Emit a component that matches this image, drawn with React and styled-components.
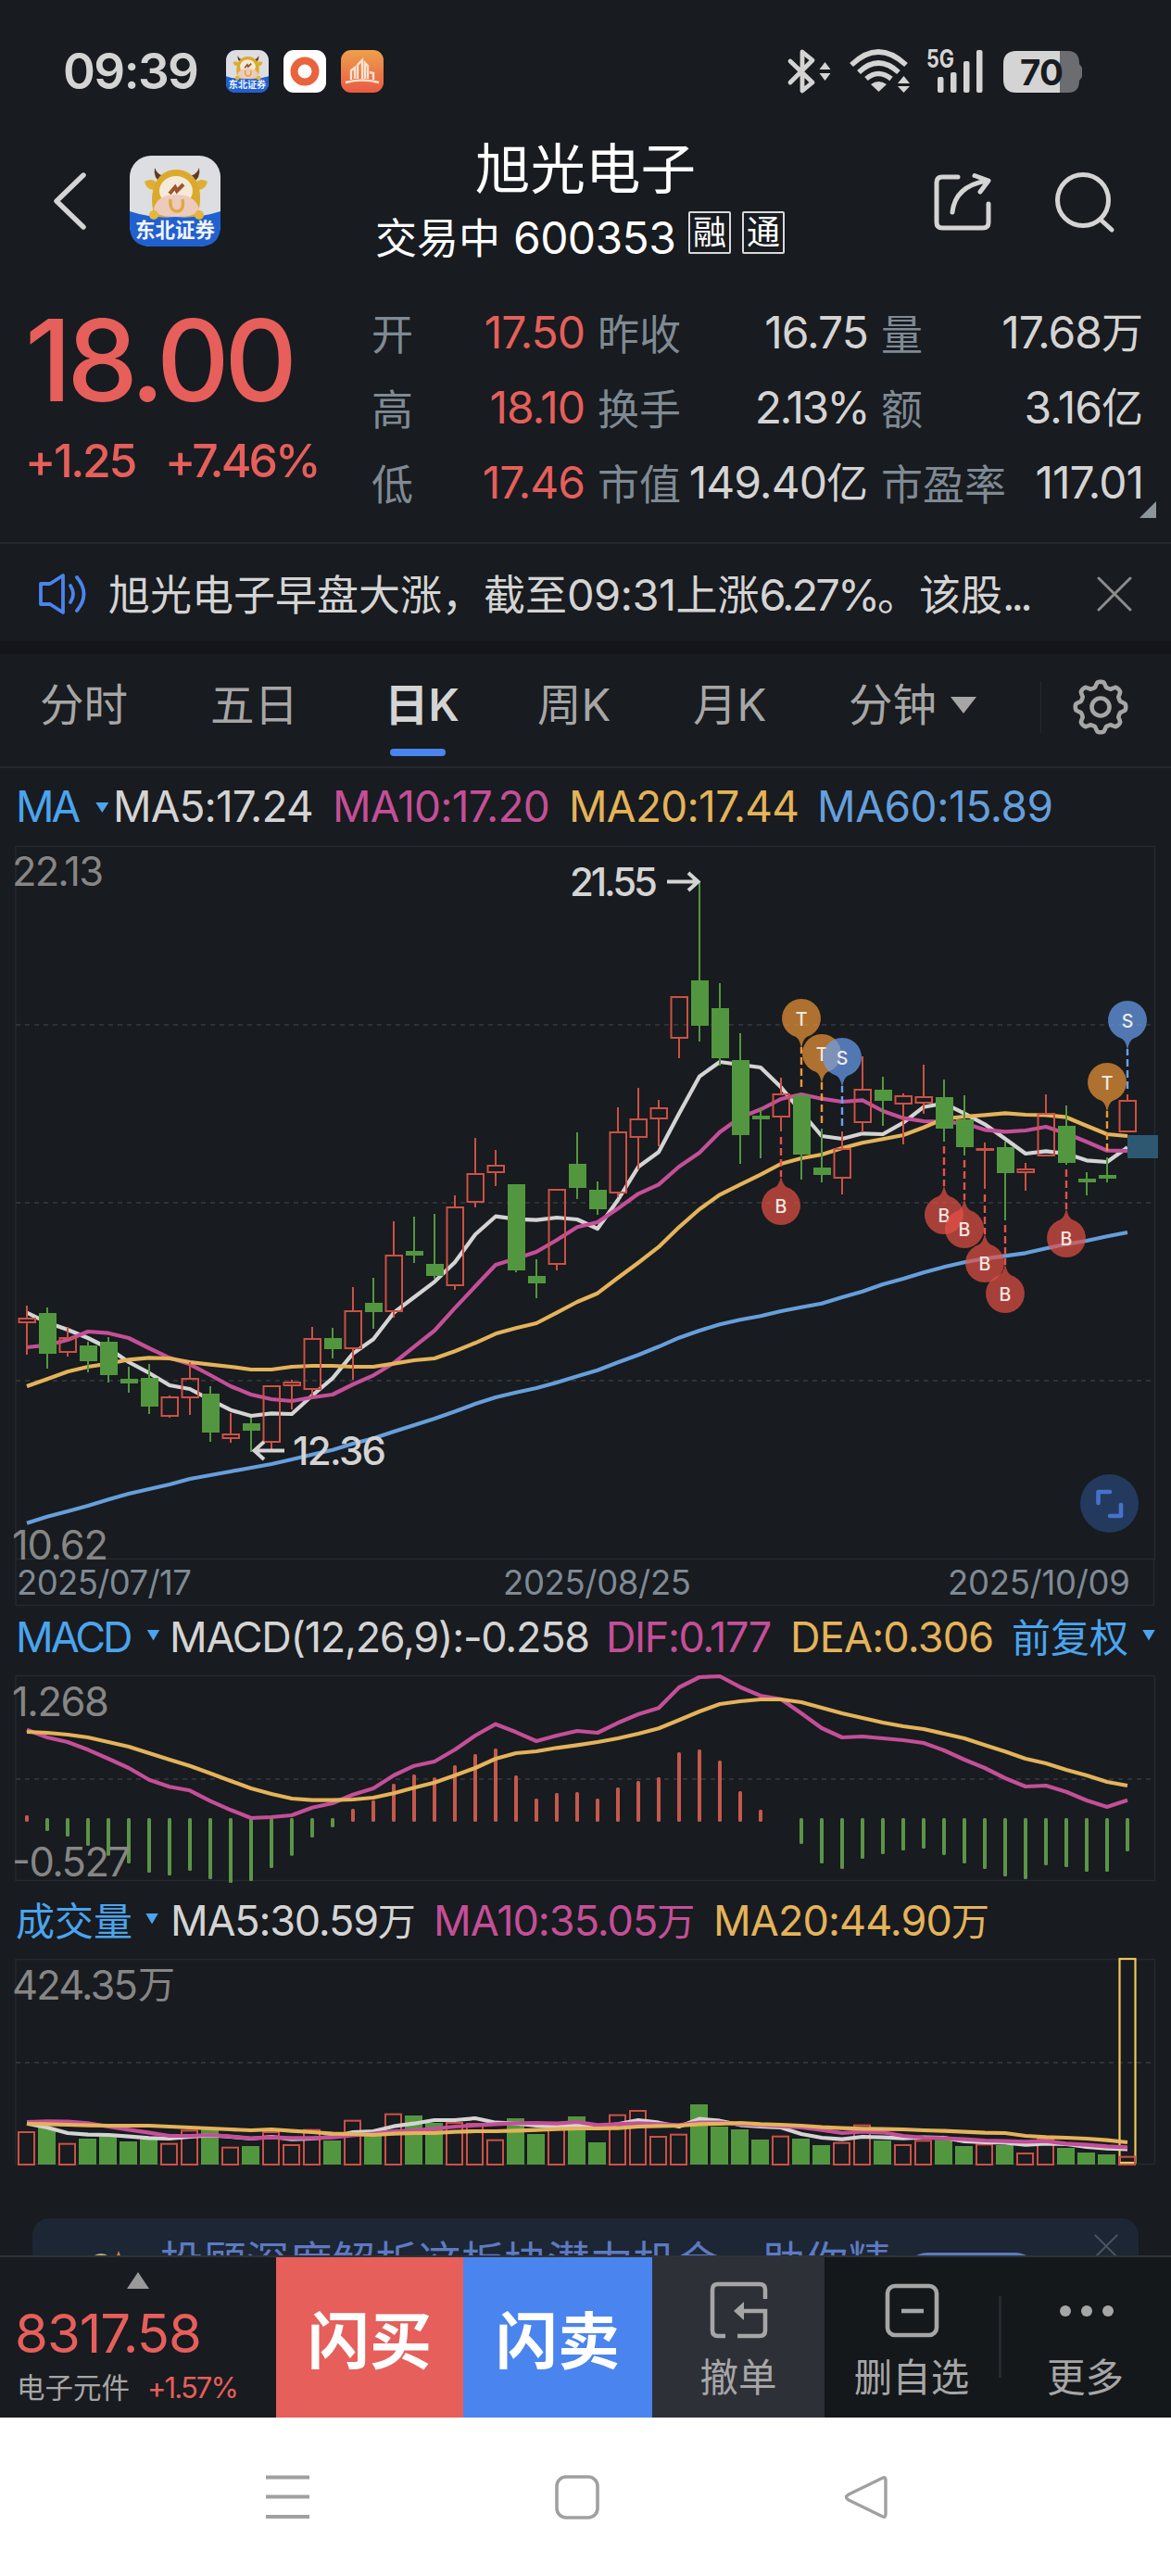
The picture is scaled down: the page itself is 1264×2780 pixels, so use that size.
import React from 'react';
import styled, { createGlobalStyle } from 'styled-components';

const colors = {
  bg: '#181b1f',
  line: '#26292e',
  text: '#d4d4d4',
  muted: '#7f8a94',
  tab: '#a6a6a6',
  axis: '#868686',
  red: '#e65f5b',
  candleRed: '#cb5145',
  green: '#52973f',
  blue: '#4a84ee',
  sky: '#4ba4ee',
  pink: '#c44f98',
  yellow: '#e4b35a',
  steel: '#669fdc'
};

const GlobalStyle = createGlobalStyle`
  * {
    box-sizing: border-box;
  }
  body {
    margin: 0;
    background: ${colors.bg};
    font-family: Inter, 'Noto Sans CJK SC', sans-serif;
  }
  svg {
    display: block;
    flex-shrink: 0;
  }
`;

const Screen = styled.div`
  width: 1264px;
  height: 2780px;
  overflow: hidden;
  display: flex;
  flex-direction: column;
  background: ${colors.bg};
  color: ${colors.text};
`;

/* Chinese glyphs are set a little smaller than the digits beside them */
const Cn = styled.span`
  font-size: ${({ $size }) => $size || 45}px;
  letter-spacing: 0;
  line-height: 0;
`;

const Tracked = styled.span`
  letter-spacing: ${({ $track }) => $track}px;
`;

/* ---------- status bar ---------- */

const StatusBar = styled.div`
  height: 153px;
  padding: 0 95px 0 68px;
  display: flex;
  align-items: center;
  justify-content: space-between;
`;

const StatusGroup = styled.div`
  display: flex;
  align-items: center;
  gap: ${({ $gap }) => $gap}px;
`;

const Clock = styled.div`
  width: 160px;
  font-size: 53px;
  font-weight: 600;
  line-height: 60px;
  letter-spacing: -1.6px;
`;

const AppLogo = ({ size }) => (
  <svg width={size} height={size} viewBox="0 0 98 98">
    <rect width="98" height="98" rx="23" fill="#dcdee1" />
    <path d="M0 60 Q24 68 49 66 Q74 68 98 60 V75 Q98 98 75 98 H23 Q0 98 0 75 Z" fill="#2160cf" />
    <path d="M27 13 Q25 24 34 29 L40 22 Q30 22 27 13 Z" fill="#5f3a22" />
    <path d="M75 13 Q77 24 68 29 L62 22 Q72 22 75 13 Z" fill="#5f3a22" />
    <path d="M16 28 Q24 23 30 30 L27 37 Q18 37 16 28 Z" fill="#dfae35" />
    <path d="M84 28 Q76 23 70 30 L73 37 Q82 37 84 28 Z" fill="#dfae35" />
    <path d="M50 15 C68 15 77 30 76 48 Q75 64 70 66 H30 Q24 62 24 48 C24 30 33 15 50 15 Z" fill="#dba92c" />
    <ellipse cx="50" cy="38" rx="18" ry="16" fill="#f3ead9" />
    <path d="M43 41 L49 34 L51 38 L58 31" fill="none" stroke="#9c552c" strokeWidth="4" />
    <path d="M26 57 Q30 42 50 42 Q70 42 75 57 Q74 66 50 66 Q27 66 26 57 Z" fill="#eccbbd" />
    <path d="M44 47 Q43 60 51 60 Q59 60 57 47" fill="none" stroke="#e0a840" strokeWidth="3.4" />
    <circle cx="26" cy="64" r="5" fill="#e5b63c" />
    <circle cx="75" cy="64" r="5" fill="#e5b63c" />
    <text x="49" y="87.5" textAnchor="middle" fontSize="21.5" fontWeight="700" fill="#f2f5fb">东北证券</text>
  </svg>
);

const RingIcon = () => (
  <svg width="46" height="46" viewBox="0 0 46 46">
    <rect width="46" height="46" rx="11" fill="#fff" />
    <circle cx="23" cy="23" r="11.5" fill="none" stroke="#e9633c" strokeWidth="8" />
  </svg>
);

const TowerIcon = () => (
  <svg width="46" height="46" viewBox="0 0 46 46">
    <defs>
      <linearGradient id="tower" x1="0" y1="0" x2="0" y2="1">
        <stop offset="0" stopColor="#eda04c" />
        <stop offset="1" stopColor="#ea5a44" />
      </linearGradient>
    </defs>
    <rect width="46" height="46" rx="11" fill="url(#tower)" />
    <path d="M5 35 Q23 30 41 35 M11 32 V22 L15 19 V31 M18 31 V16 L23 11 V31 M26 31 V14 L29 17 V31 M31 24 L35 25 V32" fill="none" stroke="#fbe3cf" strokeWidth="2.4" />
  </svg>
);

const StatusIcons = () => (
  <svg width="320" height="50" viewBox="848 51 320 50" fill={colors.text}>
    <g fill="none" stroke={colors.text} strokeWidth="4.8" strokeLinejoin="round" strokeLinecap="round">
      <path d="M852 65 L876 88 L865 97 V55 L876 64 L852 88" />
    </g>
    <path d="M889.500 66 L895.500 74 H883.500 Z M889.500 86 L895.500 78 H883.500 Z" />
    <g fill="none" stroke={colors.text} strokeWidth="5.5">
      <path d="M918 69 Q947 41 977 69" />
      <path d="M926 77 Q947 57 969 77" />
      <path d="M934 84 Q947 73 961 84" />
    </g>
    <path d="M939 90 Q947 84 956 90 L947.500 98 Z" />
    <path d="M974.500 81 L981 89 H968 Z M974.500 99 L981 92 H968 Z" />
    <text x="999" y="72" fontSize="27" fontWeight="700" textLength="30" lengthAdjust="spacingAndGlyphs">5G</text>
    <rect x="1011" y="82" width="6.500" height="17" rx="2" />
    <rect x="1025" y="77" width="6.500" height="22" rx="2" />
    <rect x="1039" y="65" width="6.500" height="34" rx="2" />
    <rect x="1053" y="53" width="6.500" height="46" rx="2" />
    <path d="M1143 54 H1152 Q1164 54 1164 68 L1167 72 V82 L1164 86 Q1164 99 1152 99 H1143 Z" fill="#6b6d70" />
    <path d="M1096 54 H1143 V99 H1096 Q1082 99 1082 85 V68 Q1082 54 1096 54 Z" />
    <text x="1100" y="91" fontSize="38.500" fontWeight="700" textLength="47" fill={colors.bg}>70</text>
  </svg>
);

/* ---------- header ---------- */

const Header = styled.div`
  height: 157px;
  padding: 0 60px 0 57px;
  display: grid;
  grid-template-columns: 348px 444px 1fr;
  align-items: start;
`;

const HeaderLeft = styled.div`
  display: flex;
  align-items: center;
  gap: 47px;
  padding-top: 15px;
`;

const HeaderRight = styled.div`
  display: flex;
  justify-content: flex-end;
  gap: 67px;
  padding-top: 33px;
`;

const TitleBlock = styled.div`
  color: #fff;
`;

const StockName = styled.div`
  height: 58px;
  line-height: 58px;
  padding-left: 10px;
  text-align: center;
  font-size: 59.5px;
  white-space: nowrap;
`;

const StockCode = styled.div`
  height: 46px;
  margin-top: 17px;
  display: flex;
  align-items: center;
  line-height: 46px;
  font-size: 48px;
  white-space: nowrap;
`;

const CodeText = styled.div`
  width: 326px;
  padding-top: 11px;
`;

const CodeNumber = styled.span`
  padding-left: 14px;
  letter-spacing: -0.6px;
`;

const Badge = styled.span`
  width: 46px;
  height: 46px;
  margin-left: 12px;
  border: 2px solid #d8d8d8;
  border-radius: 2px;
  display: flex;
  align-items: center;
  justify-content: center;
  font-size: 36px;
`;

const BackIcon = () => (
  <svg width="36" height="62" viewBox="0 0 36 62" fill="none" stroke={colors.text} strokeWidth="5.4" strokeLinecap="round" strokeLinejoin="round">
    <path d="M33 3 L4 31 L33 59" />
  </svg>
);

const ShareIcon = () => (
  <svg width="64" height="64" viewBox="0 0 64 64" fill="none" stroke={colors.text} strokeWidth="5" strokeLinecap="round" strokeLinejoin="round">
    <path d="M27 5 H10 Q4 5 4 11 V54 Q4 60 10 60 H54 Q60 60 60 54 V34" />
    <path d="M21 43 Q24 15 58 9 M45 3.500 L60 9 L51 21" />
  </svg>
);

const SearchIcon = () => (
  <svg width="66" height="66" viewBox="0 0 66 66" fill="none" stroke={colors.text} strokeWidth="5" strokeLinecap="round">
    <circle cx="31" cy="30" r="27.500" />
    <path d="M50 51 L62 62" />
  </svg>
);

/* ---------- quote ---------- */

const Quote = styled.div`
  height: 275px;
  padding-right: 30px;
  display: grid;
  grid-template-columns: 372px 1fr;
  color: ${colors.text};
`;

const PriceBlock = styled.div`
  padding: 17px 0 0 27px;
  color: ${colors.red};
`;

const Price = styled.div`
  height: 123px;
  line-height: 123px;
  font-size: 122px;
  font-weight: 500;
  letter-spacing: -5.5px;
`;

const Change = styled.div`
  height: 60px;
  margin-top: 17px;
  line-height: 60px;
  font-size: 50px;
  font-weight: 500;
  display: grid;
  grid-template-columns: 151px 1fr;
  white-space: nowrap;
`;

const StatGrid = styled.div`
  padding: 8px 0 0 29px;
  display: grid;
  grid-template-columns: 230px 292px 283px;
  grid-auto-rows: 81px;
  column-gap: 14px;
`;

const Stat = styled.div`
  display: flex;
  align-items: center;
  justify-content: space-between;
  white-space: nowrap;
`;

const StatLabel = styled.span`
  color: ${colors.muted};
  font-size: 45px;
`;

const StatValue = styled.span`
  color: ${({ $up }) => ($up ? colors.red : colors.text)};
  font-size: 48px;
  letter-spacing: ${({ $track }) => $track || -1}px;
`;

const Expand = styled.div`
  width: 18px;
  height: 18px;
  margin: -20px -14px 0 auto;
  grid-column: 3;
  background: #8c949c;
  clip-path: polygon(100% 0, 100% 100%, 0 100%);
`;

const Divider = styled.div`
  height: 2px;
  background: ${colors.line};
`;

/* ---------- news ---------- */

const News = styled.div`
  height: 105px;
  padding: 3px 42px 0;
  display: grid;
  grid-template-columns: 75px 1fr 38px;
  align-items: center;
  font-size: 47px;
  white-space: nowrap;
`;

const Gap = styled.div`
  height: 14px;
  background: #131519;
`;

/* ---------- tabs ---------- */

const Tabs = styled.div`
  height: 121px;
  padding: 0 0 8px 43px;
  display: flex;
  align-items: center;
  font-size: 47.5px;
  color: ${colors.tab};
`;

const Tab = styled.div`
  width: ${({ $width }) => $width}px;
  height: 121px;
  line-height: 117px;
  font-weight: ${({ $active }) => ($active ? 600 : 400)};
  color: ${({ $active }) => ($active ? colors.text : 'inherit')};
  white-space: nowrap;
`;

const TabUnderline = styled.div`
  width: 60px;
  height: 8px;
  margin: -11px 0 0 6px;
  border-radius: 4px;
  background: ${colors.blue};
`;

const TabSeparator = styled.div`
  width: 1px;
  height: 56px;
  margin-right: 34px;
  background: ${colors.line};
`;

const Caret = styled.i`
  display: inline-block;
  width: ${({ $w }) => $w}px;
  height: ${({ $h }) => $h}px;
  margin-left: ${({ $left }) => $left || 0}px;
  vertical-align: ${({ $raise }) => $raise || 0}px;
  background: currentColor;
  clip-path: ${({ $up }) => ($up ? 'polygon(50% 0, 100% 100%, 0 100%)' : 'polygon(0 0, 100% 0, 50% 100%)')};
`;

const gearPath = Array.from({ length: 96 }, (_, i) => {
  const a = (i / 96) * Math.PI * 2;
  const r = 24.5 + 2.8 * Math.tanh(2.2 * Math.cos(8 * a));
  return `${i ? 'L' : 'M'}${(30 + r * Math.sin(a)).toFixed(1)} ${(30 - r * Math.cos(a)).toFixed(1)}`;
}).join(' ');

const GearIcon = () => (
  <svg width="60" height="60" viewBox="0 0 60 60" fill="none" stroke={colors.tab} strokeWidth="4.600" strokeLinejoin="round">
    <path d={`${gearPath} Z`} />
    <circle cx="30" cy="30" r="9.500" />
  </svg>
);

/* ---------- legends ---------- */

const Legend = styled.div`
  height: ${({ $height }) => $height}px;
  padding-left: 17px;
  display: grid;
  grid-template-columns: ${({ $cols }) => $cols};
  align-items: center;
  font-size: ${({ $size }) => $size || 45}px;
  line-height: 1.2;
  white-space: nowrap;
`;

const LegendItem = styled.span`
  color: ${({ $color }) => $color || colors.text};
  letter-spacing: ${({ $track }) => $track || 0}px;
`;

/* ---------- charts ---------- */

const STEP = 22;
const xAt = (i) => 29 + STEP * i;
const points = (values, base) => values.map((v, i) => `${xAt(i)},${(base + v / 3).toFixed(1)}`).join(' ');

// [high, body top, body bottom, low, rising]
const candles = [
  [1409, 1423, 1427, 1462, 1], [1411, 1417, 1461, 1477, 0], [1432, 1444, 1459, 1464, 1], [1448, 1452, 1469, 1481, 0],
  [1443, 1448, 1484, 1492, 0], [1475, 1488, 1493, 1503, 0], [1472, 1487, 1518, 1526, 0], [1506, 1508, 1528, 1530, 1],
  [1470, 1488, 1508, 1527, 1], [1496, 1504, 1546, 1556, 0], [1525, 1548, 1552, 1557, 1], [1530, 1536, 1544, 1567, 0],
  [1496, 1496, 1556, 1565, 1], [1489, 1492, 1495, 1521, 1], [1432, 1445, 1499, 1508, 1], [1433, 1444, 1456, 1466, 0],
  [1389, 1415, 1455, 1489, 1], [1379, 1406, 1416, 1434, 0], [1318, 1355, 1415, 1422, 1], [1313, 1350, 1355, 1363, 0],
  [1310, 1364, 1377, 1380, 0], [1290, 1303, 1387, 1392, 1], [1228, 1267, 1297, 1303, 1], [1241, 1258, 1265, 1280, 1],
  [1278, 1278, 1371, 1373, 0], [1359, 1377, 1385, 1401, 0], [1284, 1284, 1364, 1371, 1], [1222, 1256, 1282, 1294, 0],
  [1275, 1284, 1305, 1311, 0], [1195, 1222, 1287, 1292, 1], [1174, 1208, 1227, 1262, 1], [1187, 1196, 1207, 1237, 1],
  [1076, 1076, 1120, 1142, 1], [951, 1058, 1107, 1124, 0], [1061, 1088, 1142, 1150, 0], [1115, 1144, 1225, 1256, 0],
  [1195, 1204, 1208, 1250, 0], [1163, 1181, 1205, 1221, 1], [1181, 1182, 1246, 1273, 0], [1218, 1260, 1268, 1276, 0],
  [1221, 1240, 1271, 1289, 1], [1140, 1176, 1211, 1222, 1], [1162, 1176, 1188, 1215, 0], [1180, 1183, 1191, 1235, 1],
  [1149, 1184, 1190, 1202, 1], [1165, 1184, 1218, 1232, 0], [1182, 1208, 1238, 1247, 0], [1233, 1240, 1241, 1283, 1],
  [1232, 1238, 1266, 1317, 0], [1255, 1262, 1265, 1285, 1], [1181, 1202, 1247, 1247, 1], [1193, 1215, 1255, 1257, 0],
  [1265, 1272, 1276, 1290, 0], [1249, 1268, 1272, 1276, 0], [1181, 1188, 1221, 1221, 1]
];

const ma5 = [1550, 1582, 1605, 1632, 1665, 1710, 1745, 1785, 1797, 1832, 1865, 1884, 1876, 1878, 1818, 1762, 1682, 1636, 1550, 1500, 1450, 1387, 1297, 1238, 1247, 1250, 1242, 1248, 1278, 1185, 1078, 1030, 905, 785, 738, 747, 756, 820, 900, 978, 987, 970, 972, 935, 884, 872, 905, 940, 987, 1035, 1027, 1035, 1057, 1062, 1015];
const ma10 = [1662, 1655, 1638, 1611, 1616, 1632, 1665, 1696, 1717, 1752, 1788, 1815, 1830, 1836, 1824, 1815, 1782, 1753, 1713, 1660, 1608, 1535, 1465, 1395, 1375, 1353, 1315, 1273, 1257, 1213, 1165, 1135, 1077, 1032, 965, 918, 892, 858, 843, 857, 867, 862, 897, 920, 930, 932, 937, 958, 964, 960, 948, 970, 997, 1025, 1026];
const ma20 = [1788, 1765, 1741, 1725, 1715, 1702, 1696, 1698, 1710, 1718, 1725, 1734, 1734, 1725, 1722, 1722, 1725, 1725, 1715, 1704, 1698, 1675, 1648, 1618, 1600, 1584, 1550, 1515, 1487, 1437, 1388, 1337, 1273, 1215, 1168, 1135, 1103, 1068, 1050, 1038, 1017, 1000, 988, 975, 950, 922, 915, 910, 904, 909, 910, 917, 945, 972, 978];
const ma60 = [2231, 2210, 2193, 2175, 2155, 2136, 2121, 2106, 2088, 2076, 2064, 2052, 2040, 2025, 2009, 1994, 1974, 1957, 1935, 1914, 1893, 1870, 1845, 1824, 1808, 1794, 1776, 1756, 1736, 1711, 1687, 1660, 1631, 1608, 1588, 1573, 1561, 1545, 1532, 1520, 1500, 1481, 1458, 1440, 1420, 1402, 1387, 1375, 1366, 1357, 1342, 1328, 1317, 1303, 1290];

const macdBars = [657, 708, 726, 756, 788, 813, 843, 852, 837, 864, 876, 870, 828, 788, 729, 696, 636, 608, 555, 525, 535, 495, 459, 441, 528, 603, 585, 582, 603, 567, 546, 534, 453, 444, 480, 579, 639, null, 750, 813, 831, 798, 783, 771, 765, 786, 813, 831, 855, 864, 819, 825, 840, 840, 774];
const dif = [380, 405, 420, 445, 474, 504, 542, 565, 577, 611, 640, 666, 663, 657, 632, 618, 590, 570, 528, 497, 483, 445, 399, 362, 388, 417, 399, 384, 390, 358, 330, 310, 243, 210, 207, 242, 270, 281, 327, 375, 405, 402, 408, 414, 423, 447, 477, 504, 537, 564, 561, 581, 609, 630, 608];
const dea = [387, 390, 396, 405, 420, 435, 456, 477, 497, 521, 546, 570, 588, 603, 608, 608, 606, 600, 586, 568, 551, 528, 504, 474, 456, 450, 439, 430, 420, 408, 393, 376, 349, 321, 297, 288, 282, 282, 291, 309, 327, 342, 357, 369, 378, 393, 408, 430, 451, 474, 489, 510, 528, 549, 561];

const volumes = [780, 768, 818, 804, 798, 813, 807, 818, 775, 774, 830, 828, 780, 822, 773, 810, 743, 795, 722, 729, 753, 750, 753, 806, 738, 789, 765, 732, 816, 725, 711, 795, 788, 693, 765, 774, 807, 794, 804, 825, 815, 758, 810, 822, 808, 808, 828, 820, 825, 849, 804, 834, 849, 855, 860];
const vol5 = [755, 768, 786, 791, 792, 797, 802, 804, 798, 793, 798, 804, 798, 806, 804, 798, 783, 780, 764, 755, 744, 744, 738, 752, 755, 762, 764, 761, 766, 757, 744, 752, 765, 740, 746, 760, 765, 768, 789, 801, 806, 798, 800, 803, 800, 801, 813, 816, 817, 824, 820, 822, 831, 836, 838];
const vol10 = [750, 748, 749, 754, 765, 775, 785, 795, 795, 792, 797, 803, 800, 802, 802, 800, 793, 788, 780, 777, 772, 765, 761, 757, 754, 753, 755, 750, 760, 757, 754, 757, 760, 752, 752, 757, 760, 763, 768, 776, 786, 781, 784, 795, 801, 803, 806, 810, 812, 814, 812, 820, 824, 829, 832];
const vol20 = [756, 757, 759, 761, 762, 762, 762, 765, 768, 771, 774, 777, 774, 779, 783, 788, 789, 792, 788, 786, 786, 782, 780, 780, 778, 776, 773, 771, 771, 770, 765, 763, 762, 757, 756, 753, 757, 759, 762, 767, 770, 772, 773, 774, 777, 779, 782, 785, 786, 795, 799, 801, 804, 809, 816];

// T and S pins hang above the candle, B pins below it
const pins = [
  { i: 38, y: 1099, end: 1173, type: 'T' },
  { i: 39, y: 1137, end: 1212, type: 'T' },
  { i: 40, y: 1141, end: 1215, type: 'S' },
  { i: 53, y: 1168, end: 1242, type: 'T' },
  { i: 54, y: 1101, end: 1175, type: 'S' },
  { i: 37, y: 1301, end: 1227, type: 'B' },
  { i: 45, y: 1311, end: 1237, type: 'B' },
  { i: 46, y: 1326, end: 1252, type: 'B' },
  { i: 47, y: 1363, end: 1289, type: 'B' },
  { i: 48, y: 1396, end: 1322, type: 'B' },
  { i: 51, y: 1336, end: 1262, type: 'B' }
];

const pinFill = { T: '#ee9638', S: '#69a0f2', B: '#e65046' };

const Pin = ({ i, y, end, type }) => {
  const x = xAt(i);
  const dir = type === 'B' ? -1 : 1;
  return (
    <g>
      <path d={`M${x} ${end} V${y + dir * 31}`} stroke={pinFill[type]} strokeWidth="2.400" strokeDasharray="8 4" />
      <path
        d={`M${x - 6} ${y + dir * 20.1} A21 21 0 1 ${dir === 1 ? 1 : 0} ${x + 6} ${y + dir * 20.1} Q${x + 2} ${y + dir * 22} ${x} ${y + dir * 32} Q${x - 2} ${y + dir * 22} ${x - 6} ${y + dir * 20.1} Z`}
        fill={pinFill[type]}
        fillOpacity="0.7"
      />
      <text x={x} y={y + 8} textAnchor="middle" fontSize="19.500" fontWeight="500" fill="#f3e9e6">{type}</text>
    </g>
  );
};

const Candle = ({ i, data: [high, top, bottom, low, rising] }) => {
  const x = xAt(i);
  if (rising) {
    return (
      <g stroke={colors.candleRed} strokeWidth="2" fill="none">
        <path d={`M${x} ${high} V${top} M${x} ${bottom} V${low}`} />
        <rect x={x - 8.5} y={top} width="17.500" height={Math.max(bottom - top, 1)} />
      </g>
    );
  }
  return (
    <g fill={colors.green}>
      <rect x={x - 1} y={high} width="2" height={low - high} />
      <rect x={x - 9} y={top} width="19" height={bottom - top} />
    </g>
  );
};

const Line = ({ values, base, color }) => (
  <polyline points={points(values, base)} fill="none" stroke={color} strokeWidth="4.200" strokeLinejoin="round" />
);

const GridLine = ({ y }) => (
  <path d={`M17 ${y} H1244`} stroke="#2f3238" strokeWidth="2" strokeDasharray="5 5" />
);

const PriceChart = () => (
  <svg width="1264" height="823" viewBox="0 912 1264 823">
    <path d="M17 913.500 H1246.500 V1682.500 H17 Z M17 1682.500 V1732.500 H1245.500 V1682.500" fill="none" stroke={colors.line} strokeWidth="1.500" />
    <GridLine y={1106} />
    <GridLine y={1298} />
    <GridLine y={1490} />
    <g fontSize="43.500" fill={colors.axis}>
      <text x="13" y="956" textLength="99">22.13</text>
      <text x="13" y="1683" textLength="104">10.62</text>
    </g>
    <g fontSize="36.500" fill={colors.muted}>
      <text x="18" y="1720.500" textLength="189">2025/07/17</text>
      <text x="543" y="1720.500" textLength="203">2025/08/25</text>
      <text x="1023" y="1720.500" textLength="197">2025/10/09</text>
    </g>
    <Line values={ma60} base={900} color={colors.steel} />
    <Line values={ma5} base={900} color={colors.text} />
    <Line values={ma10} base={900} color={colors.pink} />
    <Line values={ma20} base={900} color={colors.yellow} />
    {candles.map((data, i) => (
      <Candle key={i} i={i} data={data} />
    ))}
    <rect x="1217" y="1225" width="33" height="25" fill="#2e5872" />
    <g fontSize="42" fontWeight="500" fill={colors.text}>
      <text x="615" y="967" textLength="95">21.55</text>
      <text x="316" y="1581" textLength="101">12.36</text>
    </g>
    <g fill="none" stroke={colors.text} strokeWidth="4">
      <path d="M720 951.500 H753 M743 942 L753.500 951.500 L743 961" />
      <path d="M307 1565.500 H275 M285 1556 L274.500 1565.500 L285 1575" />
    </g>
    {pins.map((pin) => (
      <Pin key={pin.i} {...pin} />
    ))}
    <circle cx="1197.500" cy="1622.500" r="31.500" fill="#233a5e" />
    <path d="M1185.500 1622 V1610 H1198 M1210 1624 V1636 H1198" fill="none" stroke="#4573c8" strokeWidth="4.600" strokeLinecap="round" strokeLinejoin="round" />
  </svg>
);

const MacdChart = () => (
  <svg width="1264" height="242" viewBox="0 1798 1264 242">
    <rect x="17" y="1808.500" width="1229.500" height="221" fill="none" stroke={colors.line} strokeWidth="1.500" />
    <GridLine y={1920} />
    {macdBars.map((v, i) => {
      if (v === null) return null;
      const up = v < 672;
      const top = up ? 1740 + v / 3 : 1962;
      const bottom = up ? 1966 : 1740 + v / 3;
      return (
        <rect key={i} x={xAt(i) - 2} y={top} width="4" height={bottom - top} rx="1.500" fill={up ? '#c4594c' : '#5b9448'} />
      );
    })}
    <Line values={dif} base={1740} color={colors.pink} />
    <Line values={dea} base={1740} color={colors.yellow} />
    <g fontSize="43.500" fill={colors.axis}>
      <text x="13" y="1852" textLength="105">1.268</text>
      <text x="13" y="2025" textLength="128">-0.527</text>
    </g>
  </svg>
);

const VolumeChart = () => (
  <svg width="1264" height="235" viewBox="0 2105 1264 235">
    <rect x="17" y="2114.500" width="1229.500" height="221" fill="none" stroke={colors.line} strokeWidth="1.500" />
    <GridLine y={2226} />
    <rect x="1208.500" y="2114" width="17" height="220" fill="none" stroke="#efc75a" strokeWidth="2.200" />
    {volumes.map((v, i) => {
      const y = 2040 + v / 3;
      return candles[i][4] ? (
        <rect key={i} x={xAt(i) - 9} y={y + 1} width="17" height={2335 - y} fill="none" stroke={colors.candleRed} strokeWidth="2" />
      ) : (
        <rect key={i} x={xAt(i) - 10} y={y} width="19" height={2336 - y} fill={colors.green} />
      );
    })}
    <Line values={vol5} base={2040} color={colors.text} />
    <Line values={vol10} base={2040} color={colors.pink} />
    <Line values={vol20} base={2040} color={colors.yellow} />
    <text x="13" y="2158" fontSize="43.500" fill={colors.axis} textLength="136">424.35</text>
    <text x="149" y="2156" fontSize="40" fill={colors.axis}>万</text>
  </svg>
);

/* ---------- promo ---------- */

const PromoZone = styled.div`
  height: 94px;
  padding: 54px 35px 0;
  overflow: hidden;
`;

const Promo = styled.div`
  height: 112px;
  padding: 0 22px 0 60px;
  border-radius: 18px;
  background: #1d2634;
  display: grid;
  grid-template-columns: 78px 803px 145px 1fr;
  align-items: start;
  color: #5d7ac2;
  font-size: 46.4px;
  line-height: 94px;
  white-space: nowrap;
`;

const PromoButton = styled.div`
  height: 50px;
  margin-top: 37px;
  border-radius: 25px;
  background: #5d7ac2;
`;

const CloseIcon = ({ size, color }) => (
  <svg width={size} height={size} viewBox="0 0 38 38" fill="none" stroke={color} strokeWidth="3" strokeLinecap="round">
    <path d="M2 2 L36 36 M36 2 L2 36" />
  </svg>
);

const PromoIcon = () => (
  <svg width="60" height="60" viewBox="0 0 60 60">
    <path d="M4 42 Q14 34 24 42 V60 H4 Z" fill="#b9ad72" />
    <path d="M33 35 L37 45 H29 Z" fill="#c47f45" />
  </svg>
);

const PromoClose = styled.div`
  padding: 17px 0 0;
  display: flex;
  justify-content: flex-end;
`;

/* ---------- bottom bar ---------- */

const ActionBar = styled.div`
  height: 175px;
  border-top: 2px solid #303236;
  display: grid;
  grid-template-columns: 298px 202px 204px 186px 188px 1px 1fr;
  background: #14181b;
`;

const SectorIndex = styled.div`
  padding: 16px 0 0 18px;
  background: ${colors.bg};
  color: #9a9a9a;
`;

const SectorValue = styled.div`
  margin-top: 15px;
  line-height: 64px;
  font-size: 58px;
  letter-spacing: -1px;
  margin-left: -2px;
  color: ${colors.red};
`;

const SectorName = styled.div`
  margin-top: 5px;
  display: grid;
  grid-template-columns: 141px 1fr;
  line-height: 44px;
  font-size: 30.5px;
  color: #a6a6a6;
`;

const SectorChange = styled.span`
  color: ${colors.red};
  font-size: 31px;
  letter-spacing: -1.9px;
`;

const CaretHolder = styled.div`
  width: 262px;
  height: 19px;
  display: flex;
  justify-content: center;
`;

const TradeButton = styled.div`
  display: flex;
  align-items: center;
  justify-content: center;
  padding-bottom: 2px;
  background: ${({ $color }) => $color};
  color: #fff;
  font-size: 67px;
  font-weight: 600;
`;

const Action = styled.div`
  height: 173px;
  padding-top: 25px;
  display: flex;
  flex-direction: column;
  align-items: center;
  gap: 16px;
  background: ${({ $raised }) => ($raised ? '#2d3037' : 'transparent')};
  color: ${colors.tab};
  font-size: 41.5px;
  line-height: 50px;
`;

const ActionSeparator = styled.div`
  width: 3px;
  height: 88px;
  margin-top: 42px;
  background: #26292e;
`;

const CancelIcon = () => (
  <svg width="64" height="64" viewBox="0 0 64 64" fill="none" stroke="#a6a6a6" strokeWidth="4.600">
    <path d="M61 20 V10 Q61 4 55 4 H10 Q4 4 4 10 V54 Q4 60 10 60 H18 M31 60 H55 Q61 60 61 54 V33 H36" />
    <path d="M27 33 L38 23 V43 Z" fill="#a6a6a6" stroke="none" />
  </svg>
);

const RemoveIcon = () => (
  <svg width="64" height="64" viewBox="0 0 64 64" fill="none" stroke="#a6a6a6" strokeWidth="4.600">
    <rect x="6" y="6" width="53" height="53" rx="8" />
    <path d="M21 33 H45" />
  </svg>
);

const MoreIcon = () => (
  <svg width="64" height="64" viewBox="0 0 64 64" fill="#a6a6a6">
    <circle cx="10" cy="33" r="6" />
    <circle cx="33" cy="33" r="6" />
    <circle cx="56" cy="33" r="6" />
  </svg>
);

const NavBar = styled.div`
  height: 171px;
  padding: 0 305px 0 287px;
  display: flex;
  align-items: center;
  justify-content: space-between;
  background: #fff;
`;

const App = () => (
  <>
    <GlobalStyle />
    <Screen>
      <StatusBar>
        <StatusGroup $gap={16}>
          <Clock>09:39</Clock>
          <AppLogo size={46} />
          <RingIcon />
          <TowerIcon />
        </StatusGroup>
        <StatusIcons />
      </StatusBar>

      <Header>
        <HeaderLeft>
          <BackIcon />
          <AppLogo size={98} />
        </HeaderLeft>
        <TitleBlock>
          <StockName>旭光电子</StockName>
          <StockCode>
            <CodeText>
              <Cn>交易中</Cn>
              <CodeNumber>600353</CodeNumber>
            </CodeText>
            <Badge>融</Badge>
            <Badge>通</Badge>
          </StockCode>
        </TitleBlock>
        <HeaderRight>
          <ShareIcon />
          <SearchIcon />
        </HeaderRight>
      </Header>

      <Quote>
        <PriceBlock>
          <Price>18.00</Price>
          <Change>
            <Tracked $track={-2.4}>+1.25</Tracked>
            <Tracked $track={-3}>+7.46%</Tracked>
          </Change>
        </PriceBlock>
        <StatGrid>
          <Stat><StatLabel>开</StatLabel><StatValue $up>17.50</StatValue></Stat>
          <Stat><StatLabel>昨收</StatLabel><StatValue>16.75</StatValue></Stat>
          <Stat><StatLabel>量</StatLabel><StatValue>17.68<Cn>万</Cn></StatValue></Stat>
          <Stat><StatLabel>高</StatLabel><StatValue $up>18.10</StatValue></Stat>
          <Stat><StatLabel>换手</StatLabel><StatValue $track={-2.6}>2.13%</StatValue></Stat>
          <Stat><StatLabel>额</StatLabel><StatValue>3.16<Cn>亿</Cn></StatValue></Stat>
          <Stat><StatLabel>低</StatLabel><StatValue $up>17.46</StatValue></Stat>
          <Stat><StatLabel>市值</StatLabel><StatValue>149.40<Cn>亿</Cn></StatValue></Stat>
          <Stat><StatLabel>市盈率</StatLabel><StatValue>117.01</StatValue></Stat>
          <Expand />
        </StatGrid>
      </Quote>
      <Divider />

      <News>
        <svg width="54" height="46" viewBox="0 0 54 46" fill="none" stroke={colors.blue} strokeWidth="3.800" strokeLinejoin="round" strokeLinecap="round">
          <path d="M2 12 H12 L26 3 V43 L12 34 H2 Z" />
          <path d="M34 14 Q40 23 34 32 M41 5 Q56 23 41 41" />
        </svg>
        <span>
          <Cn>旭光电子早盘大涨，截至</Cn>
          <Tracked $track={-0.6}>09:31</Tracked>
          <Cn>上涨</Cn>
          <Tracked $track={-3}>6.27%</Tracked>
          <Cn>。该股</Cn>
          <Tracked $track={-4}>...</Tracked>
        </span>
        <CloseIcon size={38} color="#8c8c8c" />
      </News>
      <Gap />

      <Tabs>
        <Tab $width={184}>分时</Tab>
        <Tab $width={188}>五日</Tab>
        <Tab $width={165} $active>
          日K
          <TabUnderline />
        </Tab>
        <Tab $width={168}>周K</Tab>
        <Tab $width={168}>月K</Tab>
        <Tab $width={207}>
          分钟
          <Caret $w={28} $h={18} $left={15} $raise={8} />
        </Tab>
        <TabSeparator />
        <GearIcon />
      </Tabs>
      <Divider />

      <Legend $height={83} $size={46} $cols="105px 237px 255px 268px 1fr">
        <LegendItem $color={colors.sky} $track={-3}>MA<Caret $w={14} $h={11} $left={19} $raise={10} /></LegendItem>
        <LegendItem $track={-0.9}>MA5:17.24</LegendItem>
        <LegendItem $color={colors.pink} $track={-0.8}>MA10:17.20</LegendItem>
        <LegendItem $color={colors.yellow} $track={-0.7}>MA20:17.44</LegendItem>
        <LegendItem $color={colors.steel} $track={-0.4}>MA60:15.89</LegendItem>
      </Legend>
      <PriceChart />

      <Legend $height={63} $cols="166px 471px 199px 239px 141px 1fr">
        <LegendItem $color={colors.sky} $track={-3}>MACD<Caret $w={14} $h={12} $left={18} $raise={12} /></LegendItem>
        <LegendItem $track={-1.25}>MACD(12,26,9):-0.258</LegendItem>
        <LegendItem $color={colors.pink} $track={-1.4}>DIF:0.177</LegendItem>
        <LegendItem $color={colors.yellow} $track={-0.8}>DEA:0.306</LegendItem>
        <LegendItem $color={colors.sky}><Cn $size={42}>前复权</Cn></LegendItem>
        <LegendItem $color={colors.sky}><Caret $w={14} $h={12} $raise={12} /></LegendItem>
      </Legend>
      <MacdChart />

      <Legend $height={65} $cols="167px 284px 302px 1fr">
        <LegendItem $color={colors.sky}><Cn $size={42}>成交量</Cn><Caret $w={14} $h={12} $left={14} $raise={12} /></LegendItem>
        <LegendItem $track={-1.2}>MA5:30.59<Cn $size={41}>万</Cn></LegendItem>
        <LegendItem $color={colors.pink} $track={-1}>MA10:35.05<Cn $size={41}>万</Cn></LegendItem>
        <LegendItem $color={colors.yellow} $track={-0.9}>MA20:44.90<Cn $size={41}>万</Cn></LegendItem>
      </Legend>
      <VolumeChart />

      <PromoZone>
        <Promo>
          <PromoIcon />
          <span>投顾深度解析这板块潜力机会，助你精</span>
          <PromoButton />
          <PromoClose>
            <CloseIcon size={26} color="#4d545f" />
          </PromoClose>
        </Promo>
      </PromoZone>

      <ActionBar>
        <SectorIndex>
          <CaretHolder>
            <Caret $up $w={24} $h={18} />
          </CaretHolder>
          <SectorValue>8317.58</SectorValue>
          <SectorName>
            <span>电子元件</span>
            <SectorChange>+1.57%</SectorChange>
          </SectorName>
        </SectorIndex>
        <TradeButton $color={colors.red}>闪买</TradeButton>
        <TradeButton $color={colors.blue}>闪卖</TradeButton>
        <Action $raised><CancelIcon />撤单</Action>
        <Action><RemoveIcon />删自选</Action>
        <ActionSeparator />
        <Action><MoreIcon />更多</Action>
      </ActionBar>

      <NavBar>
        <svg width="48" height="48" viewBox="0 0 48 48" stroke="#a0a0a0" strokeWidth="4">
          <path d="M0 2.500 H47 M0 23.500 H47 M0 45 H47" />
        </svg>
        <svg width="48" height="48" viewBox="0 0 48 48" fill="none" stroke="#a0a0a0" strokeWidth="3.600">
          <rect x="2" y="2" width="44" height="44" rx="10" />
        </svg>
        <svg width="48" height="48" viewBox="0 0 48 48" fill="none" stroke="#a0a0a0" strokeWidth="3.400" strokeLinejoin="round">
          <path d="M5 21 L42 3 Q45 2 45 6 V42 Q45 46 42 45 L5 27 Q0 24 5 21 Z" />
        </svg>
      </NavBar>
    </Screen>
  </>
);

export default App;
